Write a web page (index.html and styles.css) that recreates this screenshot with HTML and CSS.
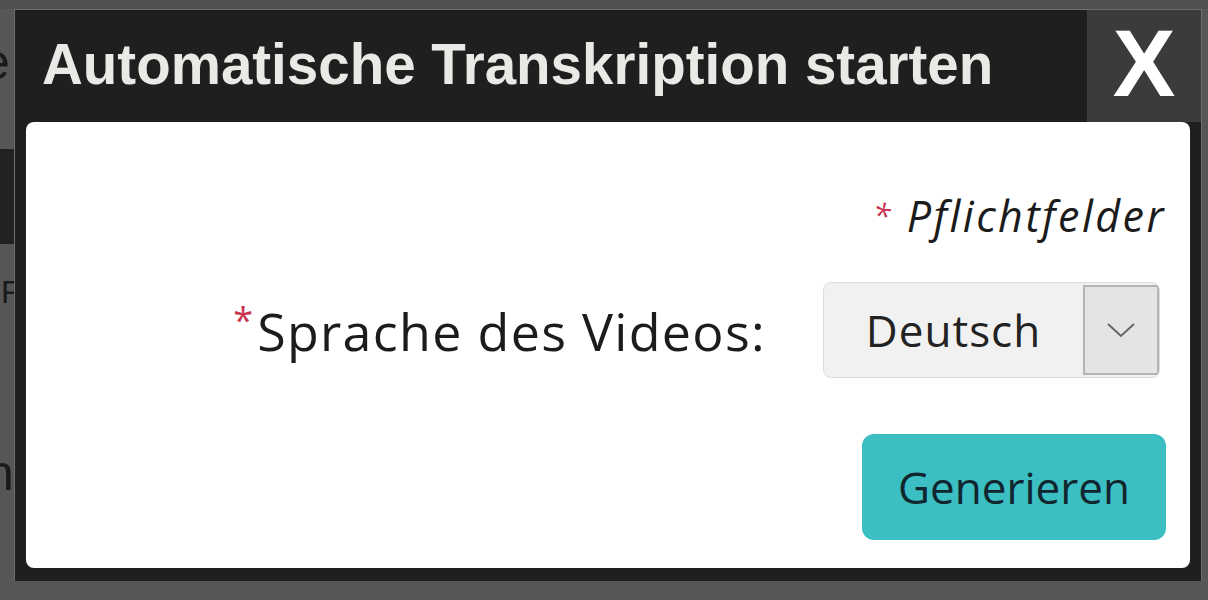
FILE: index.html
```html
<!DOCTYPE html>
<html>
<head>
    <title>Automatische Transkription starten</title>
    <link rel="stylesheet" href="styles.css">
</head>
<body>
    <!-- page behind the overlay, mostly hidden -->
    <div class="page">
        <span class="page-letter">e</span>
        <div class="page-block"></div>
        <span class="page-letter page-small">F</span>
        <span class="page-letter page-low">n</span>
    </div>

    <div class="dialog">
        <div class="dialog-header">
            <h2 class="dialog-title">Automatische Transkription starten</h2>
            <button class="close" id="closeButton">X</button>
        </div>
        <div class="dialog-body">
            <p class="required-note"><span class="star">*</span> Pflichtfelder</p>
            <div class="form-row">
                <label for="language"><span class="star">*</span>Sprache des Videos:</label>
                <div class="select" id="language">
                    <span class="select-value">Deutsch</span>
                    <span class="select-arrow">
                        <svg width="30" height="16" viewBox="0 0 30 16">
                            <path d="M2 2 L15 14 L28 2" fill="none" stroke="#666" stroke-width="2"/>
                        </svg>
                    </span>
                </div>
            </div>
            <button class="generate">Generieren</button>
        </div>
    </div>
</body>
</html>
```

FILE: styles.css
```css
body {
    margin: 0;
    background-color: #565656;
    font-family: "Open Sans", sans-serif;
    height: 600px;
    overflow: hidden;
    border-top: 9px solid #505050;
}

.page {
    display: flex;
    flex-direction: column;
    width: 14px;
    overflow: hidden;
    padding-top: 28px;
}

.page-letter {
    font-family: "Liberation Sans", sans-serif;
    font-size: 50px;
    line-height: 50px;
    color: #1a1a1a;
    margin-left: -18px;
}

.page-block {
    height: 95px;
    background-color: #222;
    margin-top: 62px;
}

.page-small {
    font-size: 32px;
    line-height: 32px;
    margin-top: 32px;
    margin-left: 1px;
}

.page-low {
    margin-top: 140px;
    margin-left: -14px;
}

/* dialog over the page */
.dialog {
    position: absolute;
    left: 14px;
    top: 9px;
    width: 1188px;
    height: 572px;
    box-sizing: border-box;
    background-color: #1f1f1f;
    border: 1px solid #6e6e6e;
    border-bottom: none;
    display: flex;
    flex-direction: column;
    padding: 0 11px 13px 11px;
}

.dialog-header {
    display: flex;
    align-items: center;
    justify-content: space-between;
    height: 112px;
    margin: 0 -11px;
    padding-left: 27px;
}

.dialog-title {
    margin: 0 0 4px 0;
    font-family: "Liberation Sans", Arial, sans-serif;
    font-size: 56.5px;
    font-weight: bold;
    color: #e9e9e6;
}

.close {
    align-self: stretch;
    width: 114px;
    border: none;
    background-color: #3b3b3d;
    color: #fff;
    font-family: "Liberation Sans", Arial, sans-serif;
    font-size: 94px;
    font-weight: bold;
    line-height: 1;
    padding: 0 0 4px 0;
    cursor: pointer;
}

.dialog-body {
    flex: 1;
    background-color: #fff;
    border-radius: 8px;
    display: flex;
    flex-direction: column;
    align-items: flex-end;
    padding: 0 24px 0 0;
}

.star {
    color: #c8334f;
}

.required-note {
    margin: 68px 0 0 0;
    font-size: 43px;
    font-style: italic;
    letter-spacing: 2.5px;
    color: #1b1b1b;
    line-height: 52px;
}

.required-note .star {
    font-size: 32px;
    vertical-align: top;
}

.form-row {
    display: flex;
    align-items: center;
    gap: 57px;
    margin-top: 40px;
    margin-right: 6px;
}

.form-row label {
    font-size: 52px;
    letter-spacing: 1.3px;
    color: #1c1c1c;
}

.form-row label .star {
    font-size: 36px;
    vertical-align: top;
    letter-spacing: 4px;
}

.select {
    display: flex;
    align-items: stretch;
    width: 337px;
    height: 96px;
    box-sizing: border-box;
    background-color: #f1f1f1;
    border: 1px solid #dcdcdc;
    border-radius: 8px;
    overflow: hidden;
}

.select-value {
    flex: 1;
    display: flex;
    align-items: center;
    justify-content: center;
    font-size: 44px;
    letter-spacing: 1px;
    color: #222;
}

.select-arrow {
    width: 72px;
    display: flex;
    align-items: center;
    justify-content: center;
    background-color: #e4e4e4;
    border: 2px solid #b4b4b4;
    margin: 2px 0;
}

.generate {
    margin-top: 56px;
    width: 304px;
    height: 106px;
    border: none;
    border-radius: 12px;
    background-color: #3bbfc2;
    color: #11262e;
    font-family: "Open Sans", sans-serif;
    font-size: 44px;
    cursor: pointer;
}
```
